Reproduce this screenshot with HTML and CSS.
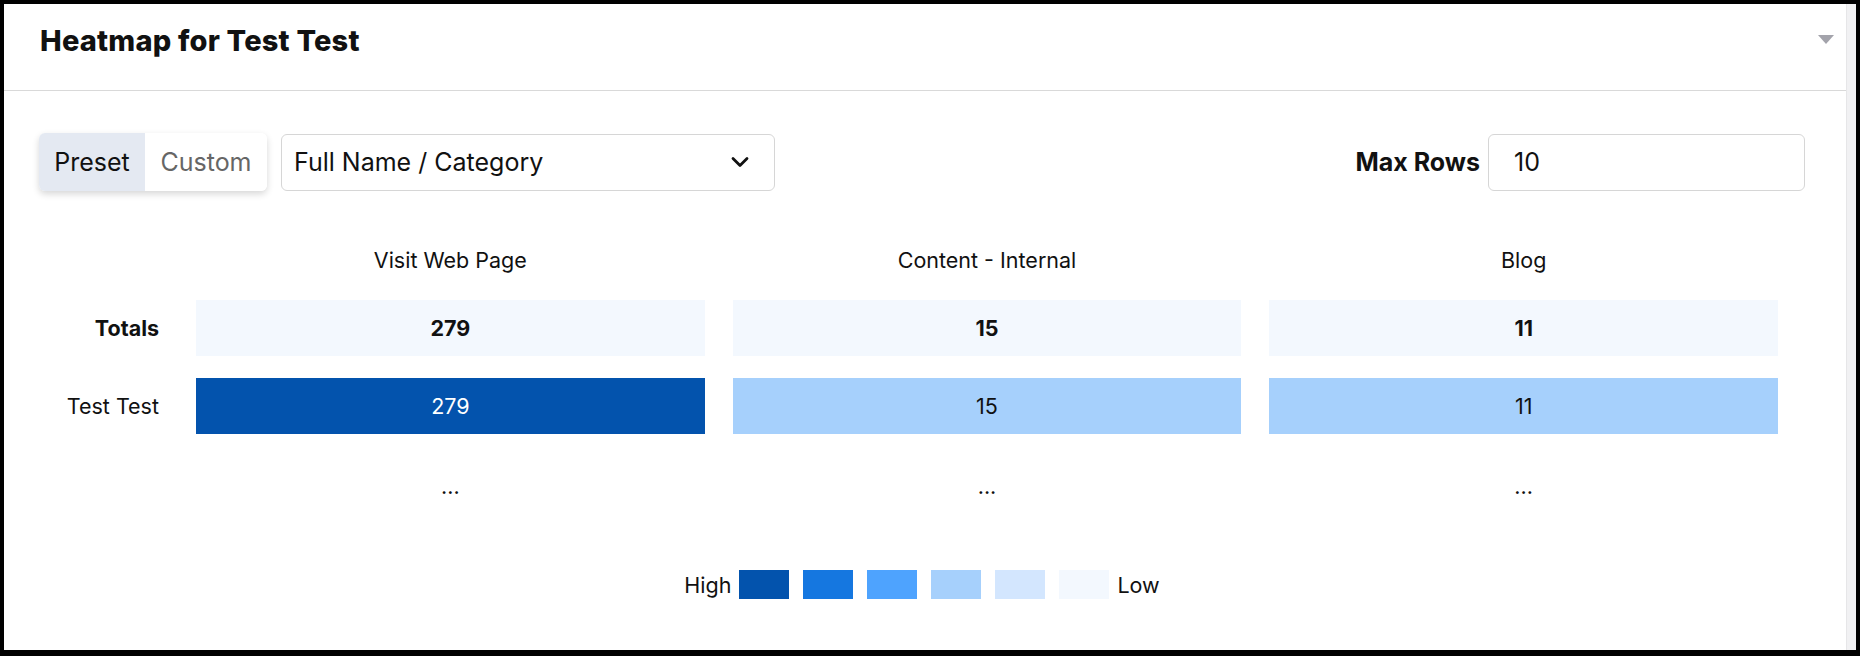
FILE: index.html
```html
<!DOCTYPE html>
<html lang="en">
<head>
  <meta charset="UTF-8">
  <meta name="viewport" content="width=device-width, initial-scale=1.0">
  <title>Heatmap for Test Test</title>
  <link rel="stylesheet" href="styles.css">
</head>
<body>
  <div class="frame">
    <div class="panel">
      <div class="panel-header">
        <h2 class="panel-title">Heatmap for Test Test</h2>
        <span class="collapse-caret"></span>
      </div>

      <div class="panel-body">
        <div class="controls">
          <div class="toggle">
            <button class="toggle-btn active">Preset</button>
            <button class="toggle-btn">Custom</button>
          </div>
          <div class="select">
            <span>Full Name / Category</span>
            <svg class="chevron" width="24" height="24" viewBox="0 0 24 24">
              <path d="M5 8.5l7 7 7-7" fill="none" stroke="#111" stroke-width="2.8" stroke-linecap="round" stroke-linejoin="round"/>
            </svg>
          </div>
          <div class="spacer"></div>
          <label class="max-label">Max Rows</label>
          <div class="max-input">10</div>
        </div>

        <div class="heatmap">
          <div class="col-head"></div>
          <div class="col-head">Visit Web Page</div>
          <div class="col-head">Content - Internal</div>
          <div class="col-head">Blog</div>

          <div class="row-label bold">Totals</div>
          <div class="cell bold lvl-6">279</div>
          <div class="cell bold lvl-6">15</div>
          <div class="cell bold lvl-6">11</div>

          <div class="row-label">Test Test</div>
          <div class="cell lvl-1">279</div>
          <div class="cell lvl-4">15</div>
          <div class="cell lvl-4">11</div>

          <div class="more"></div>
          <div class="more">...</div>
          <div class="more">...</div>
          <div class="more">...</div>
        </div>

        <div class="legend">
          <span>High</span>
          <div class="swatches">
            <span class="swatch lvl-1"></span>
            <span class="swatch lvl-2"></span>
            <span class="swatch lvl-3"></span>
            <span class="swatch lvl-4"></span>
            <span class="swatch lvl-5"></span>
            <span class="swatch lvl-6"></span>
          </div>
          <span>Low</span>
        </div>
      </div>
    </div>
    <div class="scroll-track"></div>
  </div>
</body>
</html>
```

FILE: styles.css
```css
* { box-sizing: border-box; }
html, body { margin: 0; height: 100%; background: #000; }
body { font-family: Inter, "Noto Sans", Arial, sans-serif; color: #111; padding: 4px 4px 6px 4px; }

.frame { display: flex; height: 646px; background: #fff; }
.panel { flex: 1; display: flex; flex-direction: column; }
.scroll-track { width: 10px; background: #f1f1f3; border-left: 1px solid #e6e6e8; }

.panel-header { height: 87px; display: flex; align-items: flex-start; justify-content: space-between; border-bottom: 1px solid #d9d9d9; padding: 20px 12px 0 36px; }
.panel-title { margin: 0; font-size: 29px; font-weight: 800; letter-spacing: 0.2px; line-height: 34px; }
.collapse-caret { margin-top: 11px; width: 0; height: 0; border-left: 8px solid transparent; border-right: 8px solid transparent; border-top: 9px solid #a3a3ab; }

.panel-body { padding: 42px 41px 0 35px; }

.controls { display: flex; align-items: center; gap: 14px; }
.toggle { display: flex; height: 58px; border-radius: 6px; overflow: hidden; box-shadow: 0 3px 7px rgba(0, 0, 0, 0.16); }
.toggle-btn { border: none; background: #fff; font-family: inherit; font-size: 25px; color: #666; padding: 0; cursor: pointer; }
.toggle-btn.active { background: #e4e9f2; color: #111; width: 106px; }
.toggle-btn:last-child { width: 122px; }

.select { width: 494px; height: 57px; border: 1px solid #d6d6d6; border-radius: 6px; display: flex; align-items: center; justify-content: space-between; padding: 0 22px 0 12px; font-size: 25px; }
.chevron { display: block; }

.spacer { flex: 1; }
.max-label { font-size: 25px; font-weight: 700; margin-right: -6px; }
.max-input { width: 317px; height: 57px; border: 1px solid #d6d6d6; border-radius: 6px; display: flex; align-items: center; padding-left: 25px; font-size: 25px; }

.heatmap { margin-top: 57px; padding-right: 27px; display: grid; grid-template-columns: 129px repeat(3, 1fr); grid-template-rows: 30px 56px 56px auto; column-gap: 28px; row-gap: 22px; font-size: 21.5px; }
.col-head { text-align: center; line-height: 24px; align-self: start; }
.row-label { display: flex; align-items: center; justify-content: flex-end; padding-right: 9px; }
.cell { display: flex; align-items: center; justify-content: center; }
.bold { font-weight: 700; }
.more { text-align: center; line-height: 24px; padding-top: 18px; }

.lvl-1 { background: #0353ad; color: #fff; }
.lvl-2 { background: #1577e0; }
.lvl-3 { background: #4ea3fe; }
.lvl-4 { background: #a6d0fc; }
.lvl-5 { background: #d3e6fe; }
.lvl-6 { background: #f3f8fe; }

.legend { margin-top: 72px; display: flex; justify-content: center; align-items: center; gap: 8px; font-size: 21.5px; }
.swatches { display: flex; gap: 14px; }
.swatch { width: 50px; height: 29px; }
```
